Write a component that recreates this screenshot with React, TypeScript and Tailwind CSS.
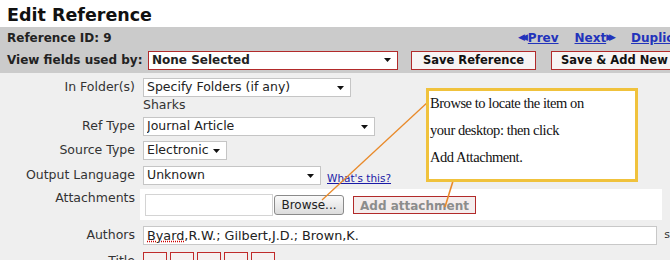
import React from 'react';

const UI = { fontFamily: 'Verdana, "DejaVu Sans", sans-serif' };

function Caret() {
  return (
    <svg width="7" height="4" viewBox="0 0 7 4" className="shrink-0">
      <path d="M0 0h7L3.5 4z" fill="#111" />
    </svg>
  );
}

function Select({ w, text, red, bold }: { w: string; text: string; red?: boolean; bold?: boolean }) {
  return (
    <div
      className={`${w} h-[19px] flex items-center justify-between bg-white pl-[3px] pr-[6px] border ${
        red ? 'border-[#b22a2a]' : 'border-[#c5c5c5]'
      } ${bold ? 'font-bold text-[12px]' : 'text-[12.5px]'}`}
    >
      <span className="truncate text-[#222]">{text}</span>
      <Caret />
    </div>
  );
}

function Row({ label, children, className = '' }: { label: string; children: React.ReactNode; className?: string }) {
  return (
    <div className={`flex ${className}`}>
      <div className="w-[136px] shrink-0 text-right pr-[1px] text-[12.5px] leading-[18px] text-[#333] whitespace-nowrap">{label}</div>
      <div className="flex-1 min-w-0">{children}</div>
    </div>
  );
}

export default function App() {
  return (
    <div className="relative w-[670px] h-[260px] overflow-hidden bg-[#efefef]" style={UI}>
      <div className="bg-white h-[27px] pl-[7px] pt-[5px]">
        <h1 className="text-[17.5px] font-bold leading-[20px] text-[#111]">Edit Reference</h1>
      </div>

      <div className="bg-[#cbcbcb] h-[46px] pl-[7px]">
        <div className="flex items-center h-[22px] whitespace-nowrap">
          <span className="w-[511px] shrink-0 text-[12px] font-bold text-[#222]">Reference ID: 9</span>
          <div className="flex items-center text-[12px] font-bold text-[#2233bb]">
            <span className="text-[9px] tracking-[-4px] mr-[4px]">◀◀</span>
            <a className="underline">Prev</a>
            <a className="underline ml-[16px]">Next</a>
            <span className="text-[9px] tracking-[-4px] mr-[4px]">▶▶</span>
            <a className="underline ml-[15px]">Duplicate</a>
          </div>
        </div>
        <div className="flex items-center h-[22px] whitespace-nowrap">
          <span className="text-[12px] font-bold text-[#222] w-[141px] shrink-0">View fields used by:</span>
          <Select w="w-[250px] shrink-0" text="None Selected" red bold />
          <button className="ml-[13px] shrink-0 h-[19px] w-[125px] border border-[#b22a2a] bg-[#f7f4f4] text-[11.5px] font-bold text-[#111]">
            Save Reference
          </button>
          <button className="ml-[15px] h-[19px] w-[140px] shrink-0 border border-[#b22a2a] bg-[#f7f4f4] text-[11.5px] font-bold text-[#111] text-left pl-[9px]">
            Save &amp; Add New
          </button>
        </div>
      </div>

      <div className="pt-[5px] flex flex-col">
        <Row label="In Folder(s)">
          <div className="pl-[7px]">
            <Select w="w-[208px]" text="Specify Folders (if any)" />
            <div className="text-[12.5px] text-[#333] leading-[15px]">Sharks</div>
          </div>
        </Row>
        <Row label="Ref Type" className="mt-[5px]">
          <div className="pl-[7px]">
            <Select w="w-[232px]" text="Journal Article" />
          </div>
        </Row>
        <Row label="Source Type" className="mt-[5px]">
          <div className="pl-[7px]">
            <Select w="w-[84px]" text="Electronic" />
          </div>
        </Row>
        <Row label="Output Language" className="mt-[6px]">
          <div className="pl-[7px] flex items-end gap-[6px]">
            <Select w="w-[178px]" text="Unknown" />
            <a className="text-[10.5px] text-[#1a1aa6] underline leading-[13px] whitespace-nowrap">What's this?</a>
          </div>
        </Row>
        <Row label="Attachments" className="mt-[4px]">
          <div className="ml-[4px] mr-[8px] bg-white h-[31px] flex items-center pl-[5px]">
            <div className="w-[128px] h-[22px] border border-[#d4d4d4] bg-white" />
            <button className="ml-[1px] h-[20px] w-[70px] rounded-[3px] border border-[#8a8a8a] bg-gradient-to-b from-[#fafafa] to-[#dcdcdc] text-[12px] text-[#222]">
              Browse...
            </button>
            <button className="ml-[9px] h-[18px] w-[123px] border border-[#b22a2a] bg-[#f4eded] text-[12px] font-bold text-[#8c8c8c]">
              Add attachment
            </button>
          </div>
        </Row>
        <Row label="Authors" className="mt-[6px]">
          <div className="pl-[7px] flex items-center">
            <div className="w-[517px] h-[19px] border border-[#c8c8c8] bg-white text-[12.8px] text-[#222] pl-[3px] leading-[17px] whitespace-nowrap">
              <span className="underline decoration-dotted decoration-[#c00]">Byard</span>,R.W.; Gilbert,J.D.; Brown,K.
            </div>
            <span className="ml-[7px] text-[11px] text-[#333]">s</span>
          </div>
        </Row>
        <Row label="Title" className="mt-[7px]">
          <div className="pl-[7px] flex gap-[3px]">
            {[0, 1, 2, 3, 4].map((i) => (
              <div key={i} className="w-[24px] h-[20px] border border-[#c02a2a] bg-[#f6f0f0]" />
            ))}
          </div>
        </Row>
      </div>

      <svg className="absolute left-0 top-0 pointer-events-none" width="670" height="260">
        <path d="M429 101 L322 200" stroke="#e98a2a" strokeWidth="1.3" fill="none" />
        <path d="M453 181 L445 207" stroke="#e98a2a" strokeWidth="1.6" fill="none" />
      </svg>

      <div
        className="absolute left-[426px] top-[88px] w-[212px] h-[94px] border-[3px] border-[#f0c23c] bg-white pl-[1px] text-[14.5px] leading-[27px] text-[#111] tracking-[-0.45px]"
        style={{ fontFamily: '"Liberation Serif", serif' }}
      >
        <div className="-mt-[1px]">
          Browse to locate the item on
          <br />
          your desktop: then click
          <br />
          Add Attachment.
        </div>
      </div>
    </div>
  );
}
